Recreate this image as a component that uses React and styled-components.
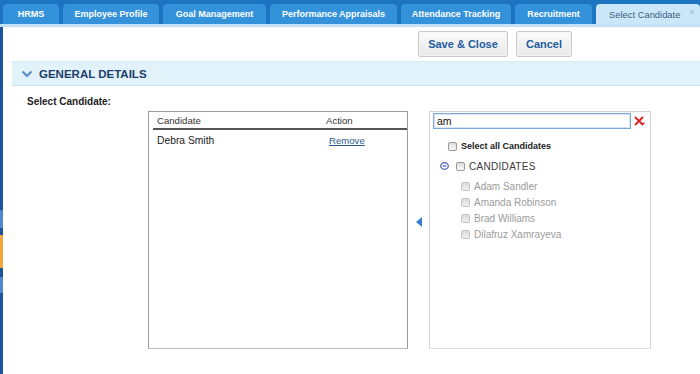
import styled, { createGlobalStyle } from 'styled-components'

const GlobalStyle = createGlobalStyle`
  html, body {
    margin: 0;
    padding: 0;
    background: #ffffff;
    font-family: "Liberation Sans", Arial, sans-serif;
  }
`

// Styled Components
const Page = styled.div`
  width: 700px;
  height: 374px;
  display: flex;
  flex-direction: column;
  overflow: hidden;
  background: #fff;
`

const TabBar = styled.div`
  height: 24px;
  display: flex;
  align-items: flex-end;
  gap: 4px;
  padding-left: 3px;
  background: #1c73bf;
  border-bottom: 3px solid #c3e2f6;
`

const Tab = styled.div`
  width: ${(p) => p.$w}px;
  height: 20px;
  box-sizing: border-box;
  display: flex;
  align-items: center;
  justify-content: ${(p) => (p.$active ? 'flex-start' : 'center')};
  padding-left: ${(p) => (p.$active ? '13px' : '0')};
  gap: 9px;
  border-radius: 4px 4px 0 0;
  background: ${(p) => (p.$active ? '#cae7f9' : '#3392d9')};
  color: ${(p) => (p.$active ? '#3d5f80' : '#ffffff')};
  font-size: ${(p) => (p.$active ? '9.4px' : '9px')};
  font-weight: ${(p) => (p.$active ? 'normal' : 'bold')};
  white-space: nowrap;
`

const TabClose = styled.span`
  font-size: 9px;
  color: #8fb0cc;
  margin-top: -5px;
`

const Body = styled.div`
  flex: 1;
  display: flex;
`

const Stripe = styled.div`
  width: 3px;
  display: flex;
  flex-direction: column;
`

const StripePart = styled.div`
  height: ${(p) => p.$h}px;
  flex: ${(p) => (p.$h ? 'none' : '1')};
  background: ${(p) => p.$c};
`

const Main = styled.div`
  flex: 1;
  display: flex;
  flex-direction: column;
`

const Toolbar = styled.div`
  display: flex;
  justify-content: flex-end;
  gap: 8px;
  padding: 4px 128px 0 0;
`

const Button = styled.button`
  height: 26px;
  width: ${(p) => p.$w}px;
  border: 1px solid #c9c9c9;
  border-radius: 2px;
  background: linear-gradient(#fbfbfb, #e7e7e7);
  box-shadow: inset 0 0 0 1px #f4f4f4;
  color: #1f5c9f;
  font-family: "Liberation Sans", Arial, sans-serif;
  font-size: 11px;
  font-weight: bold;
  padding: 0;
`

const SectionHeader = styled.div`
  margin: 4px 0 0 9px;
  height: 25px;
  box-sizing: border-box;
  display: flex;
  align-items: center;
  gap: 6px;
  padding-left: 9px;
  background: #e2f2fb;
  border-top: 1px solid #d6ebf8;
  border-bottom: 1px solid #c8e2f3;
  color: #1c3e6a;
  font-size: 11.5px;
  font-weight: bold;
`

const Label = styled.div`
  margin: 10px 0 0 24px;
  font-size: 10px;
  line-height: 12px;
  font-weight: bold;
  color: #222;
`

const Picker = styled.div`
  display: flex;
  margin: 3px 0 0 145px;
  height: 238px;
`

const SelectedBox = styled.div`
  width: 260px;
  box-sizing: border-box;
  border: 1px solid #9d9d9d;
  border-bottom-color: #bdbdbd;
  padding: 0 0 0 4px;
`

const Grid = styled.div`
  display: grid;
  grid-template-columns: 169px 1fr;
`

const HeadCell = styled.div`
  height: 16px;
  line-height: 17px;
  padding-left: 4px;
  font-size: 9.6px;
  color: #333;
  border-bottom: 2px solid #555;
`

const Cell = styled.div`
  padding: 5px 0 0 ${(p) => p.$pl || 4}px;
  font-size: 10.3px;
  line-height: 12px;
  color: #222;
`

const RemoveLink = styled.a`
  font-size: 9.6px;
  color: #2b5c8f;
  text-decoration: underline;
  cursor: pointer;
`

const MoveArrow = styled.div`
  width: 21px;
  display: flex;
  justify-content: center;
  padding-top: 106px;
  box-sizing: border-box;
`

const SourceBox = styled.div`
  width: 222px;
  box-sizing: border-box;
  border: 1px solid #d2d2d2;
  border-bottom-color: #e0e0e0;
  display: flex;
  flex-direction: column;
`

const SearchRow = styled.div`
  display: flex;
  align-items: center;
  gap: 3px;
  padding: 1px 0 0 3px;
`

const SearchInput = styled.input`
  width: 198px;
  height: 16px;
  box-sizing: border-box;
  border: 1px solid #7ea8db;
  box-shadow: inset 0 0 0 1px #d6e5f6;
  padding: 0 3px;
  font-family: "Liberation Sans", Arial, sans-serif;
  font-size: 10.5px;
  color: #111;
  outline: none;
`

const Tree = styled.div`
  display: flex;
  flex-direction: column;
  padding-top: 7px;
`

const Children = styled.div`
  display: flex;
  flex-direction: column;
  padding-top: 2px;
`

const TreeRow = styled.label`
  display: flex;
  align-items: center;
  height: ${(p) => p.$h || 16}px;
  gap: 4px;
  padding-left: ${(p) => p.$indent}px;
  font-size: ${(p) => p.$size || 10}px;
  font-weight: ${(p) => (p.$bold ? 'bold' : 'normal')};
  color: ${(p) => p.$color || '#222'};
  white-space: nowrap;
`

const Check = styled.input`
  appearance: none;
  margin: 0;
  width: 9px;
  height: 9px;
  border-radius: 2px;
  border: 1px solid ${(p) => (p.$dim ? '#c4c4c4' : '#9a9a9a')};
  background: ${(p) => (p.$dim ? 'linear-gradient(#dcdcdc, #eeeeee)' : 'linear-gradient(#dedede, #f7f7f7)')};
  box-sizing: border-box;
  flex: none;
`

const Toggle = styled.span`
  width: 9px;
  height: 8px;
  margin-right: 3px;
  display: inline-flex;
`

const GroupName = styled.span`
  letter-spacing: 0.3px;
`

const tabs = [
  { label: 'HRMS', w: 56 },
  { label: 'Employee Profile', w: 96 },
  { label: 'Goal Management', w: 103 },
  { label: 'Performance Appraisals', w: 127 },
  { label: 'Attendance Tracking', w: 110 },
  { label: 'Recruitment', w: 77 },
]

const stripe = [
  { h: 183, c: '#1d5398' },
  { h: 18, c: '#4d88cb' },
  { h: 7, c: '#1d5398' },
  { h: 33, c: '#f5a63b' },
  { h: 9, c: '#1d5398' },
  { h: 16, c: '#4d88cb' },
  { h: 0, c: '#1d5398' },
]

const candidates = ['Adam Sandler', 'Amanda Robinson', 'Brad Williams', 'Dilafruz Xamrayeva']

const App = () => {
  return (
    <Page>
      <GlobalStyle />
      <TabBar>
        {tabs.map((t) => (
          <Tab key={t.label} $w={t.w}>{t.label}</Tab>
        ))}
        <Tab $w={104} $active>
          Select Candidate
          <TabClose>×</TabClose>
        </Tab>
      </TabBar>

      <Body>
        <Stripe>
          {stripe.map((s, i) => (
            <StripePart key={i} $h={s.h} $c={s.c} />
          ))}
        </Stripe>

        <Main>
          <Toolbar>
            <Button $w={90}>Save &amp; Close</Button>
            <Button $w={56}>Cancel</Button>
          </Toolbar>

          <SectionHeader>
            <svg width="12" height="8" viewBox="0 0 12 8">
              <polyline points="1.5,1.5 6,6 10.5,1.5" fill="none" stroke="#5b8fc4" strokeWidth="2.2" />
            </svg>
            GENERAL DETAILS
          </SectionHeader>

          <Label>Select Candidate:</Label>

          <Picker>
            <SelectedBox>
              <Grid>
                <HeadCell>Candidate</HeadCell>
                <HeadCell>Action</HeadCell>
                <Cell>Debra Smith</Cell>
                <Cell $pl={7}><RemoveLink>Remove</RemoveLink></Cell>
              </Grid>
            </SelectedBox>

            <MoveArrow>
              <svg width="6" height="10" viewBox="0 0 6 10">
                <polygon points="6,0 6,10 0,5" fill="#3b7fd4" />
              </svg>
            </MoveArrow>

            <SourceBox>
              <SearchRow>
                <SearchInput defaultValue="am" />
                <svg width="11" height="10" viewBox="0 0 11 10">
                  <path d="M1 1 L9 9 M9 1 L1 9" stroke="#e0201c" strokeWidth="1.8" fill="none" />
                  <path d="M8 8 L10.5 7" stroke="#e0201c" strokeWidth="1.4" fill="none" />
                </svg>
              </SearchRow>

              <Tree>
                <TreeRow $indent={18} $bold $size={9} $h={20}>
                  <Check type="checkbox" />
                  Select all Candidates
                </TreeRow>
                <TreeRow $indent={10} $color="#3a3a3a" $h={20}>
                  <Toggle>
                    <svg width="9" height="8" viewBox="0 0 9 8">
                      <ellipse cx="4.5" cy="4" rx="3.8" ry="3.3" fill="#fff" stroke="#4f5fb8" strokeWidth="1.2" />
                      <line x1="2.5" y1="4" x2="6.5" y2="4" stroke="#4f5fb8" strokeWidth="1.2" />
                    </svg>
                  </Toggle>
                  <Check type="checkbox" />
                  <GroupName>CANDIDATES</GroupName>
                </TreeRow>
                <Children>
                  {candidates.map((c) => (
                    <TreeRow key={c} $indent={31} $color="#9b9b9b">
                      <Check type="checkbox" $dim />
                      {c}
                    </TreeRow>
                  ))}
                </Children>
              </Tree>
            </SourceBox>
          </Picker>
        </Main>
      </Body>
    </Page>
  )
}

export default App
